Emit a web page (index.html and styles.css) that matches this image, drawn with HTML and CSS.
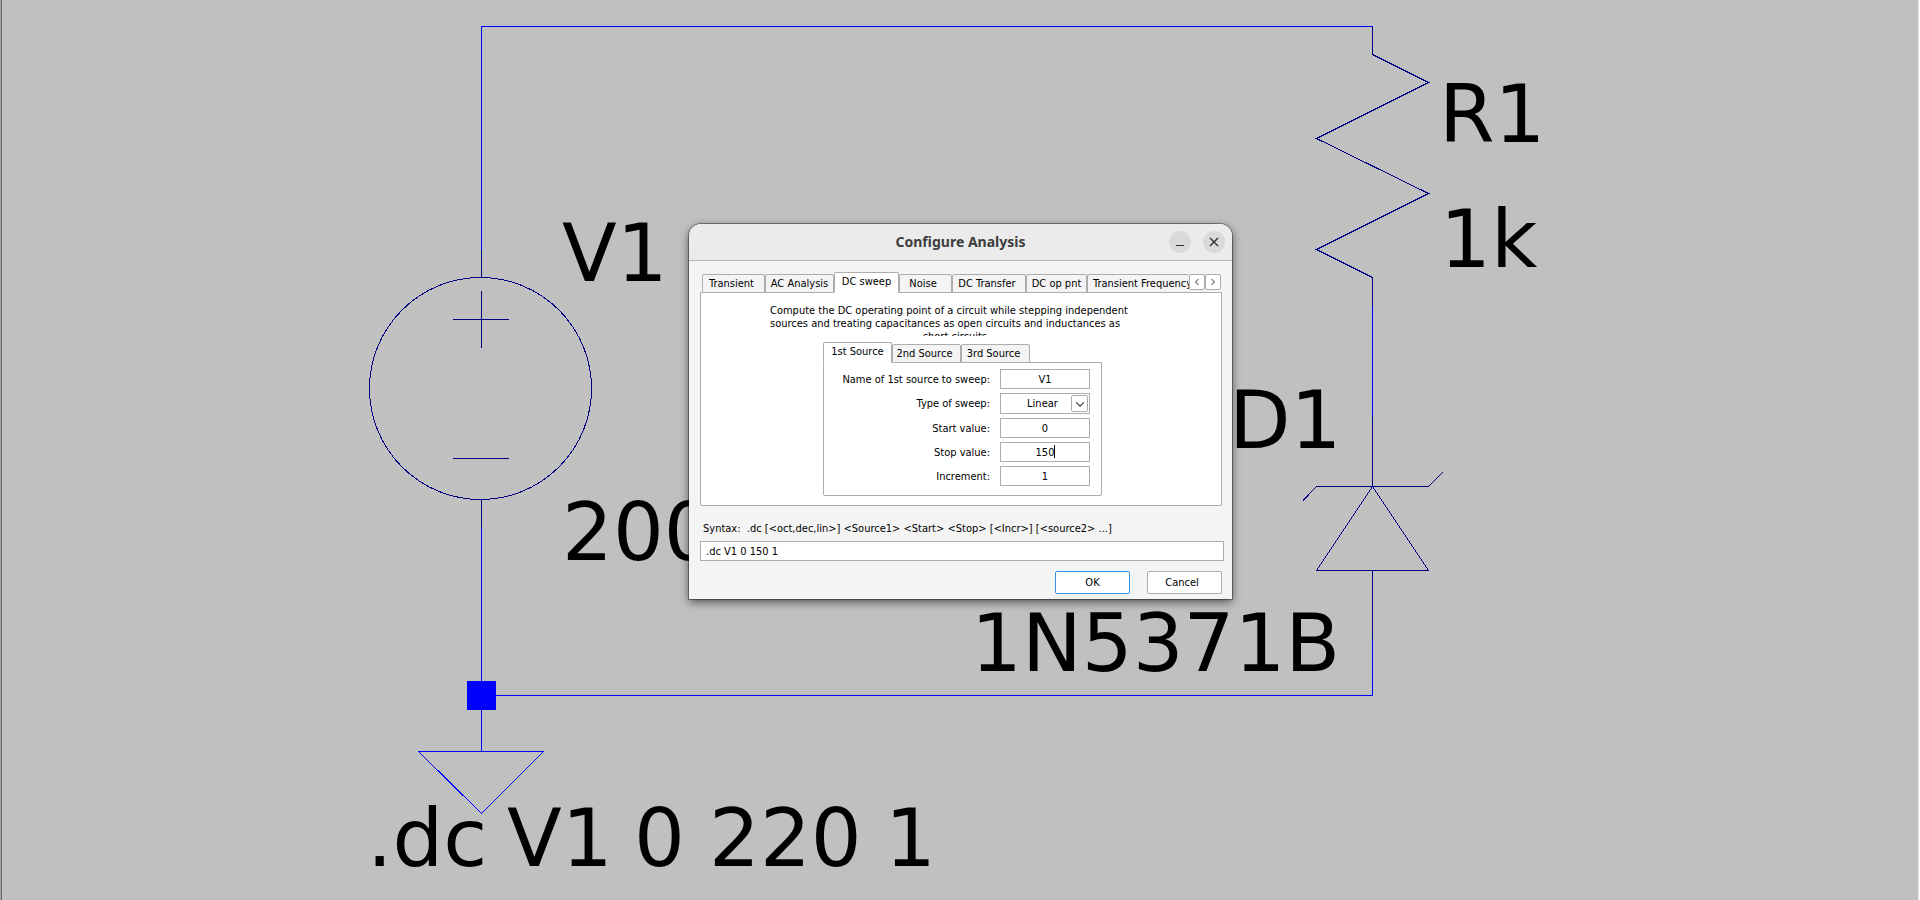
FILE: index.html
```html
<!DOCTYPE html>
<html lang="en">
<head>
<meta charset="utf-8">
<title>Configure Analysis</title>
<link rel="stylesheet" href="styles.css">
</head>
<body>
<main class="sheet">
  <svg class="schematic" viewBox="0 0 1920 900" preserveAspectRatio="xMidYMin slice" role="img" aria-label="Circuit schematic">
    <!-- wires -->
    <path class="wire" d="M481.500 250.500V26.500H1372.500M1372.500 305.500V417.500M1372.500 638.500V695.500H481.500M481.500 528V751.500"/>
    <path class="wire" d="M418.500 751.500H543.500L481.500 813.500Z"/>
    <rect class="node" x="467" y="681" width="29" height="29"/>
    <!-- voltage source -->
    <circle class="part" cx="480.500" cy="388.500" r="111"/>
    <path class="part" d="M481.500 250V277.500M481.500 499.500V528M481.500 291V348M453 319.500H509M453 458.500H509"/>
    <!-- resistor -->
    <path class="part" d="M1372.500 26.500V54.500L1428.500 82.500L1316.500 138.500L1428.500 193.500L1316.500 249.500L1372.500 277.500V305.500"/>
    <!-- zener diode -->
    <path class="part" d="M1372.500 417V486.500M1303 500.500L1316.500 486.500H1428.500L1442.500 472.500M1372.500 486.500L1316.500 570.500H1428.500ZM1372.500 570.500V639"/>
    <g class="label">
      <text x="562" y="281">V1</text>
      <text x="562" y="560">200</text>
      <text x="1439" y="142">R1</text>
      <text x="1440" y="267">1k</text>
      <text x="1229" y="448">D1</text>
      <text x="971" y="671">1N5371B</text>
      <text y="866"><tspan x="367">.dc</tspan> <tspan x="507">V1</tspan> <tspan x="634">0</tspan> <tspan x="709">220</tspan> <tspan x="885">1</tspan></text>
    </g>
  </svg>

  <section class="dialog" role="dialog" aria-labelledby="title">
    <header class="titlebar">
      <h1 id="title" class="title">Configure Analysis</h1>
      <button class="round" type="button" aria-label="Minimize"><svg viewBox="0 0 22 22"><path d="M7 14.500H15"/></svg></button>
      <button class="round" type="button" aria-label="Close"><svg viewBox="0 0 22 22"><path stroke-width="1.4" d="M7 7L15 15M15 7L7 15"/></svg></button>
    </header>
    <form class="content">
      <div class="tabs" role="tablist">
        <button type="button" class="tab w-transient" role="tab">Transient</button>
        <button type="button" class="tab w-ac" role="tab">AC Analysis</button>
        <button type="button" class="tab active w-sweep" role="tab">DC sweep</button>
        <button type="button" class="tab w-noise" role="tab">Noise</button>
        <button type="button" class="tab w-transfer" role="tab">DC Transfer</button>
        <button type="button" class="tab w-op" role="tab">DC op pnt</button>
        <button type="button" class="tab cut" role="tab">Transient Frequency</button>
        <button type="button" class="scroll" aria-label="Scroll left"><svg viewBox="0 0 14 14"><path d="M8.500 4L5.500 7L8.500 10"/></svg></button>
        <button type="button" class="scroll" aria-label="Scroll right"><svg viewBox="0 0 14 14"><path d="M5.500 4L8.500 7L5.500 10"/></svg></button>
      </div>
      <div class="panel">
        <p class="about">Compute the DC operating point of a circuit while stepping independent<br>sources and treating capacitances as open circuits and inductances as<span class="last">short circuits.</span></p>
        <div class="source">
          <div class="tabs" role="tablist">
            <button type="button" class="tab active w-source" role="tab">1st Source</button>
            <button type="button" class="tab w-source" role="tab">2nd Source</button>
            <button type="button" class="tab w-source" role="tab">3rd Source</button>
          </div>
          <div class="fields">
            <label for="name">Name of 1st source to sweep:</label>
            <input id="name" class="box" type="text" value="V1">
            <label for="type">Type of sweep:</label>
            <div class="combo">
              <select id="type" class="box"><option>Linear</option><option>Octave</option><option>Decade</option><option>List</option></select>
              <span class="arrow"><svg viewBox="0 0 14 14"><path d="M4 6L7.500 9.500L11 6"/></svg></span>
            </div>
            <label for="start">Start value:</label>
            <input id="start" class="box" type="text" value="0">
            <label for="stop">Stop value:</label>
            <div class="combo">
              <input id="stop" class="box" type="text" value="150">
              <span class="caret"></span>
            </div>
            <label for="inc">Increment:</label>
            <input id="inc" class="box" type="text" value="1">
          </div>
        </div>
      </div>
      <label class="syntax" for="command">Syntax:&nbsp; .dc [&lt;oct,dec,lin&gt;] &lt;Source1&gt; &lt;Start&gt; &lt;Stop&gt; [&lt;Incr&gt;] [&lt;source2&gt; ...]</label>
      <input id="command" class="box command" type="text" value=".dc V1 0 150 1">
      <div class="actions">
        <button type="button" class="action primary">OK</button>
        <button type="button" class="action">Cancel</button>
      </div>
    </form>
  </section>
</main>
</body>
</html>
```

FILE: styles.css
```css
* { box-sizing: border-box; }

body {
  margin: 0;
  background: #c0c0c0;
  color: #000;
  font: 11px/13px "DejaVu Sans Condensed", "DejaVu Sans", sans-serif;
}

button, input, select { font: inherit; color: inherit; margin: 0; }
button svg, .arrow svg { display: block; width: 100%; height: 100%; fill: none; stroke: #333; }

.sheet {
  position: relative;
  min-height: 100vh;
  overflow: hidden;
  box-shadow: inset 1px 0 #a0a0a0, inset 2px 0 #696969, inset -1px 0 #fff, inset -2px 0 #e3e3e3;
}

.schematic { display: block; width: 100%; height: 100vh; }
.wire, .part { fill: none; stroke-width: 1; shape-rendering: crispEdges; }
.wire { stroke: #00f; }
.part { stroke: #000080; }
.node { fill: #00f; }
.label { font: 80px "DejaVu Sans", sans-serif; fill: #000; }

.dialog {
  position: absolute;
  top: 224px;
  left: calc(50% - 271px);
  width: 543px;
  background: #f4f4f4;
  border-radius: 12px 12px 0 0;
  box-shadow: 0 0 0 1px rgba(0, 0, 0, .35), 0 3px 10px rgba(0, 0, 0, .6);
}

.titlebar {
  display: flex;
  align-items: center;
  gap: 12px;
  height: 37px;
  padding: 0 7px 0 75px;
  background: #ebebeb;
  border-bottom: 1px solid #b8b8b8;
  border-radius: 12px 12px 0 0;
}
.title {
  flex: 1;
  margin: 0;
  text-align: center;
  font: bold 14px/20px "Noto Sans", sans-serif;
  color: #3d3d3d;
}
.round {
  width: 22px;
  height: 22px;
  padding: 0;
  border: 0;
  border-radius: 50%;
  background: #dadada;
}

.content { padding: 11px 8px 5px 11px; }

.tabs { position: relative; display: flex; align-items: flex-end; height: 21px; margin-bottom: -1px; }
.content > .tabs { padding-left: 2px; padding-right: 3px; }
.tab {
  flex: none;
  height: 19px;
  padding: 0;
  border: 1px solid #adadad;
  border-radius: 2px 2px 0 0;
  background: #f4f4f4;
  white-space: nowrap;
}
.tab.active { height: 21px; background: #fff; border-bottom-color: #fff; padding-bottom: 2px; }
.w-transient { width: 63px; padding-right: 4px; }
.w-ac { width: 69px; }
.w-sweep { width: 65px; }
.w-noise { width: 53px; padding-right: 5px; }
.w-transfer { width: 74px; padding-right: 4px; }
.w-op { width: 61px; }
.w-source { width: 69px; }
.w-source:not(.active) { padding-right: 4px; }
.tab.cut { flex: 1; min-width: 0; overflow: hidden; text-align: left; padding-left: 5px; border-right: 0; }
.scroll {
  width: 16px;
  height: 16px;
  margin-bottom: 3px;
  padding: 0;
  border: 1px solid #adadad;
  border-radius: 2px;
  background: #fff;
}

.panel {
  height: 214px;
  margin-right: 2px;
  padding: 11px 0 0 69px;
  border: 1px solid #adadad;
  border-radius: 0 0 2px 2px;
  background: #fff;
}
.about { width: 373px; height: 32px; margin: 0; overflow: hidden; white-space: nowrap; }
.last { display: block; text-align: center; }

.source { width: 279px; margin: 6px 0 0 53px; }
.fields {
  display: grid;
  grid-template-columns: 1fr 90px;
  align-items: center;
  column-gap: 10px;
  row-gap: 4px;
  padding: 6px 11px 9px 0;
  border: 1px solid #adadad;
  border-radius: 0 0 2px 2px;
}
.fields label { text-align: right; }
.box {
  display: block;
  width: 100%;
  height: 20px;
  padding: 0;
  border: 1px solid #adadad;
  border-radius: 0;
  background: #fff;
  text-align: center;
  outline: 0;
}
.combo { position: relative; }
select.box { appearance: none; height: 21px; padding-right: 5px; text-align-last: center; }
.arrow {
  position: absolute;
  top: 2px;
  right: 2px;
  width: 17px;
  height: 17px;
  border: 1px solid #adadad;
  border-radius: 2px;
  background: #fff;
  pointer-events: none;
}
.caret { position: absolute; top: 3px; left: 54px; width: 1px; height: 13px; background: #000; }

.syntax { display: block; margin: 16px 0 6px 3px; white-space: pre; }
.command { text-align: left; padding-left: 5px; }
.actions { display: flex; justify-content: flex-end; gap: 17px; margin: 10px 2px 0 0; }
.action {
  width: 75px;
  height: 23px;
  padding: 0;
  border: 1px solid #adadad;
  border-radius: 2px;
  background: #fff;
}
.action:not(.primary) { padding-right: 5px; }
.primary { border-color: #3592e6; }
```
